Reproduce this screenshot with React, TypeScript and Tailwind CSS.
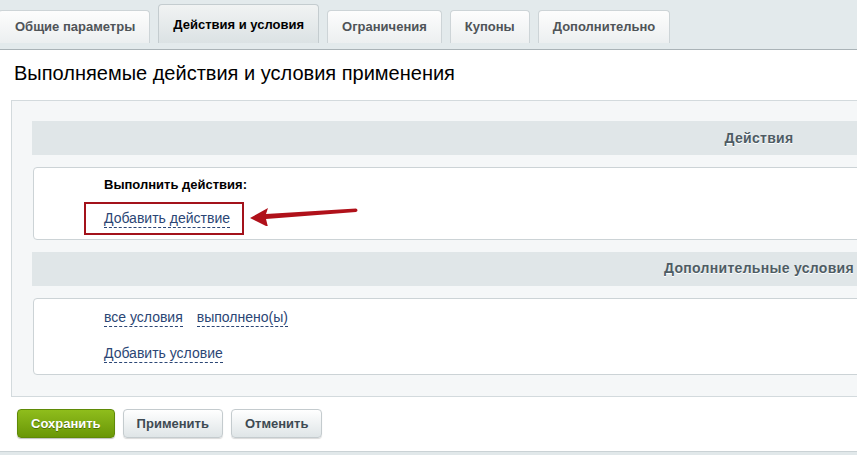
import React from 'react';

const tabs = [
  { id: 'general', label: 'Общие параметры' },
  { id: 'actions', label: 'Действия и условия' },
  { id: 'limits', label: 'Ограничения' },
  { id: 'coupons', label: 'Купоны' },
  { id: 'extra', label: 'Дополнительно' },
];

const DashedLink: React.FC<{ children: React.ReactNode; className?: string }> = ({ children, className = '' }) => (
  <a
    href="#"
    onClick={e => e.preventDefault()}
    className={`inline-block text-[14px] leading-4 pb-px border-b border-dashed border-[#2b4675] text-[#2b4675] no-underline ${className}`}
  >
    {children}
  </a>
);

const SectionHeader: React.FC<{ title: string }> = ({ title }) => (
  <div className="h-[34px] w-[1454px] bg-[#e0e6e8] flex items-center justify-center">
    <span className="text-[14px] font-bold tracking-[0.3px] text-[#4e5c64] [text-shadow:0_1px_0_#ffffff]">{title}</span>
  </div>
);

const App: React.FC = () => {
  const activeTab = 'actions';

  return (
    <div className="w-[857px] h-[455px] overflow-hidden bg-white flex flex-col font-['Liberation_Sans',Arial,sans-serif] text-[13px] text-black">
      {/* Tabs */}
      <div className="h-[50px] shrink-0 bg-[#e3eaec] border-b border-[#aab3b7] flex items-end gap-2 pb-[6px] pl-0">
        {tabs.map((tab, i) => {
          const active = tab.id === activeTab;
          return (
            <button
              key={tab.id}
              className={`px-[14px] rounded-t-[4px] border border-b-0 font-bold text-[13px] flex items-center ${
                i === 0 ? '-ml-[2px] pl-[16px]' : ''
              } ${
                active
                  ? 'h-[39px] pt-[2px] bg-gradient-to-b from-[#f1f3f3] to-[#dbe2e4] border-[#c4cccf] text-black'
                  : 'h-[33px] bg-gradient-to-b from-[#fdfdfd] to-[#eceff0] border-[#cdd4d7] text-[#4f5458]'
              }`}
            >
              {tab.label}
            </button>
          );
        })}
      </div>

      {/* Title */}
      <h1 className="mt-[11px] ml-[14px] text-[20px] leading-6 font-normal text-black">
        Выполняемые действия и условия применения
      </h1>

      {/* Rules panel */}
      <div className="mt-[15px] ml-[11px] w-[1500px] bg-[#f5f7f8] border border-[#d3dadd] pt-5 pl-5 pb-[21px]">
        <SectionHeader title="Действия" />
        <div className="mt-3 ml-px w-[1400px] bg-white border border-[#ccd3d6] rounded-[4px] pl-[70px] pt-[9px] pb-[10px]">
          <div className="font-bold leading-4">Выполнить действия:</div>
          <div className="mt-4 relative inline-block">
            <DashedLink>Добавить действие</DashedLink>
            {/* highlight frame + pointer */}
            <span className="absolute -left-[20px] -top-[7px] w-[160px] h-[33px] border-2 border-[#a3121b] pointer-events-none" />
            <svg
              className="absolute left-[146px] -top-[9px] pointer-events-none"
              width="110"
              height="26"
              viewBox="0 0 110 26"
            >
              <path d="M0 18 L18 8 L16 14 L106 8.5 Q109 10 106 12 L16 19 L18 27 Z" fill="#b0111a" />
            </svg>
          </div>
        </div>

        <div className="mt-3">
          <SectionHeader title="Дополнительные условия" />
        </div>
        <div className="mt-3 ml-px w-[1400px] bg-white border border-[#ccd3d6] rounded-[4px] pl-[70px] pt-[10px] pb-[11px]">
          <div className="flex gap-[14px]">
            <DashedLink>все условия</DashedLink>
            <DashedLink>выполнено(ы)</DashedLink>
          </div>
          <div className="mt-[17px]">
            <DashedLink>Добавить условие</DashedLink>
          </div>
        </div>
      </div>

      {/* Form buttons */}
      <div className="mt-[12px] ml-[17px] flex gap-2">
        <button className="h-[29px] px-[13px] rounded-[4px] border border-[#5f8a07] bg-gradient-to-b from-[#8fbd1c] to-[#6a9706] text-white font-bold text-[13px] [text-shadow:0_1px_0_#4d6f05] shadow-[0_1px_1px_rgba(0,0,0,0.25)]">
          Сохранить
        </button>
        <button className="h-[29px] px-[13px] rounded-[4px] border border-[#c4cbce] bg-gradient-to-b from-[#ffffff] to-[#dfe5e7] text-[#3e4a52] font-bold text-[13px] shadow-[0_1px_1px_rgba(0,0,0,0.15)]">
          Применить
        </button>
        <button className="h-[29px] px-[13px] rounded-[4px] border border-[#c4cbce] bg-gradient-to-b from-[#ffffff] to-[#dfe5e7] text-[#3e4a52] font-bold text-[13px] shadow-[0_1px_1px_rgba(0,0,0,0.15)]">
          Отменить
        </button>
      </div>

      <div className="mt-[13px] flex-1 bg-[#e1e8ea] border-t border-[#cad2d5]" />
    </div>
  );
};

export default App;
